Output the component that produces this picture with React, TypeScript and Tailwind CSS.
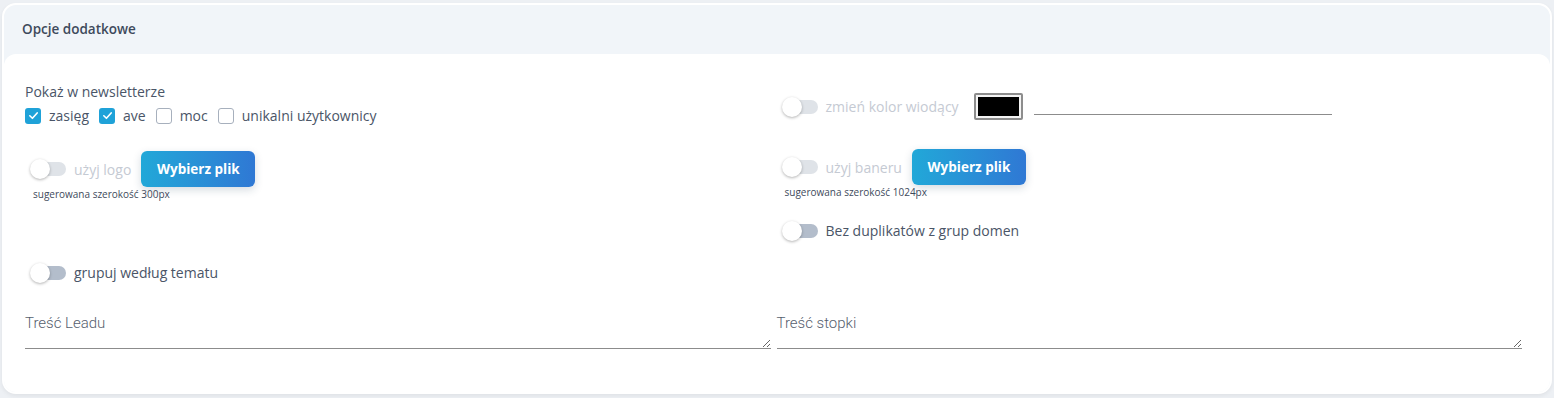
import React from "react";

const font = { fontFamily: '"Open Sans", "Noto Sans", sans-serif' };

const Toggle = ({ disabled }: { disabled?: boolean }) => (
  <span className="relative ml-[5px] inline-flex h-[20px] w-[36px] shrink-0 items-center">
    <span
      className={`absolute left-[2px] right-0 h-[14px] rounded-full ${
        disabled ? "bg-[#dfe3e8]" : "bg-[#b3bdcb]"
      }`}
    />
    <span className="absolute left-0 h-[20px] w-[20px] rounded-full bg-white shadow-[0_1px_3px_rgba(0,0,0,0.3)]" />
  </span>
);

const Check = ({ checked, label }: { checked?: boolean; label: string }) => (
  <label className="flex items-center gap-[8px]">
    {checked ? (
      <span className="flex h-[16px] w-[16px] items-center justify-center rounded-[3px] bg-[#1fa2d8]">
        <svg width="11" height="11" viewBox="0 0 12 12" fill="none">
          <path d="M2 6.3 4.8 9 10 3.2" stroke="white" strokeWidth="1.8" strokeLinecap="round" strokeLinejoin="round" />
        </svg>
      </span>
    ) : (
      <span className="h-[16px] w-[16px] rounded-[3px] border-[1.5px] border-[#a7b0bd] bg-white" />
    )}
    <span className="text-[14px] text-[#4a5567]">{label}</span>
  </label>
);

const FileButton = () => (
  <button className="h-[36px] w-[114px] rounded-[6px] bg-gradient-to-r from-[#21a8d8] to-[#2f78d4] text-[13.5px] font-bold text-white shadow-[0_3px_8px_rgba(30,60,90,0.18)]">
    Wybierz plik
  </button>
);

const NoteArea = ({ label }: { label: string }) => (
  <div className="flex flex-col">
    <span
      className="text-[15px] leading-[18px] text-[#56606e]"
      style={{ fontFamily: '"Roboto", sans-serif', fontWeight: 300 }}
    >
      {label}
    </span>
    <textarea
      rows={1}
      className="h-[17px] w-full border-b border-[#8c8c8c] outline-none"
    />
  </div>
);

export default function App() {
  return (
    <div className="h-[398px] bg-[#edf0f4] px-[2px] pt-[3px]" style={font}>
      <div className="flex h-[391px] flex-col rounded-[14px] border-2 border-white bg-[#f1f5f9] shadow-[0_2px_4px_rgba(0,0,0,0.06)]">
        <div className="flex h-[49px] items-center px-[18px] text-[13.5px] font-semibold text-[#3e4a5c]">
          Opcje dodatkowe
        </div>
        <div className="flex-1 rounded-[12px] bg-white pl-[21px] pr-[28px] pt-[28px]">
          <div className="grid grid-cols-2 gap-x-[6px]">
            {/* left column */}
            <div className="flex flex-col">
              <span className="text-[14px] leading-[20px] text-[#4a5567]">Pokaż w newsletterze</span>
              <div className="mt-[3px] flex items-center gap-[10px]">
                <Check checked label="zasięg" />
                <Check checked label="ave" />
                <Check label="moc" />
                <Check label="unikalni użytkownicy" />
              </div>
              <div className="mt-[25px] flex items-center">
                <Toggle disabled />
                <span className="ml-[8px] text-[14px] text-[#c5cad3]">użyj logo</span>
                <span className="ml-[10px]">
                  <FileButton />
                </span>
              </div>
              <span className="ml-[8px] text-[10px] text-[#3e4a5c]">sugerowana szerokość 300px</span>
              <div className="mt-[60px] flex items-center">
                <Toggle />
                <span className="ml-[8px] text-[14px] text-[#4a5567]">grupuj według tematu</span>
              </div>
            </div>

            {/* right column */}
            <div className="flex flex-col">
              <div className="mt-[11px] flex items-center">
                <Toggle disabled />
                <span className="ml-[8px] text-[14px] text-[#c5cad3]">zmień kolor wiodący</span>
                <span className="ml-[15px] h-[27px] w-[49px] rounded-[2px] border-[2px] border-[#8d8d8d] bg-black shadow-[inset_0_0_0_2px_#f4f4f4]" />
                <span className="ml-[11px] mt-[16px] h-[1px] w-[298px] bg-[#8c8c8c]" />
              </div>
              <div className="mt-[29px] flex items-center">
                <Toggle disabled />
                <span className="ml-[8px] text-[14px] text-[#c5cad3]">użyj baneru</span>
                <span className="ml-[10px]">
                  <FileButton />
                </span>
              </div>
              <span className="ml-[8px] text-[10px] text-[#3e4a5c]">sugerowana szerokość 1024px</span>
              <div className="mt-[20px] flex items-center">
                <Toggle />
                <span className="ml-[8px] text-[14px] text-[#4a5567]">Bez duplikatów z grup domen</span>
              </div>
            </div>

            <div className="col-span-2 mt-[31px] grid grid-cols-2 gap-x-[6px]">
              <NoteArea label="Treść Leadu" />
              <NoteArea label="Treść stopki" />
            </div>
          </div>
        </div>
      </div>
    </div>
  );
}
